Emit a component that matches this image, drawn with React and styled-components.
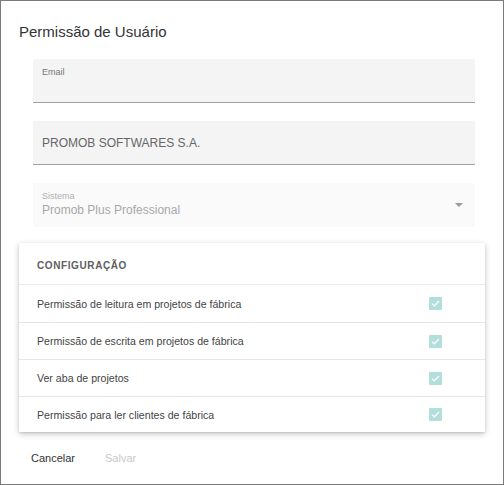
import React from "react";
import styled, { createGlobalStyle } from "styled-components";

const Global = createGlobalStyle`
  html, body { margin: 0; padding: 0; background: #fff; }
  body { font-family: "Liberation Sans", Arial, sans-serif; }
  * { box-sizing: border-box; }
`;

const Dialog = styled.div`
  width: 504px;
  height: 485px;
  border: 1px solid #7a7a7a;
  background: #fff;
  display: flex;
  flex-direction: column;
`;

const Title = styled.h2`
  margin: 0;
  padding: 22px 0 0 18px;
  font-size: 15px;
  font-weight: 400;
  color: #333;
  line-height: 18px;
`;

const Fields = styled.div`
  display: flex;
  flex-direction: column;
  gap: 18px;
  padding: 18px 28px 0 32px;
`;

const Field = styled.div`
  height: 44px;
  background: ${(p) => (p.$disabled ? "#fafafa" : "#f4f4f4")};
  border-bottom: ${(p) => (p.$underline ? "1px solid #a0a0a0" : "none")};
  border-radius: 2px 2px 0 0;
  padding: 0 9px;
  display: flex;
  flex-direction: column;
  justify-content: ${(p) => (p.$center ? "center" : "flex-start")};
  position: relative;
`;

const Label = styled.span`
  font-size: 9px;
  color: ${(p) => (p.$disabled ? "#b0b0b0" : "#777")};
  margin-top: 8px;
  line-height: 11px;
`;

const Value = styled.span`
  font-size: 12px;
  color: ${(p) => (p.$disabled ? "#a8a8a8" : "#666")};
  line-height: 16px;
`;

const Arrow = styled.span`
  position: absolute;
  right: 12px;
  top: 20px;
  width: 0;
  height: 0;
  border-left: 4px solid transparent;
  border-right: 4px solid transparent;
  border-top: 4px solid #9a9a9a;
`;

const Card = styled.div`
  margin: 16px 18px 0 18px;
  background: #fff;
  box-shadow: 0 2px 6px rgba(0, 0, 0, 0.22), 0 1px 2px rgba(0, 0, 0, 0.1);
`;

const CardHeader = styled.div`
  height: 42px;
  display: flex;
  align-items: center;
  padding: 3px 0 0 18px;
  font-size: 10px;
  font-weight: 700;
  letter-spacing: 0.6px;
  color: #5e5e5e;
  border-bottom: 1px solid #ececec;
`;

const Row = styled.div`
  height: ${(p) => (p.$last ? 36 : 37)}px;
  display: flex;
  align-items: center;
  justify-content: space-between;
  padding: 0 43px 0 18px;
  font-size: 10.6px;
  color: #444;
  border-top: ${(p) => (p.$first ? "none" : "1px solid #e6e6e6")};
`;

const Check = styled.span`
  width: 13px;
  height: 13px;
  background: #b2dfdb;
  border-radius: 1px;
  display: flex;
  align-items: center;
  justify-content: center;
`;

const Actions = styled.div`
  display: flex;
  gap: 30px;
  padding: 20px 0 0 30px;
`;

const Btn = styled.button`
  background: none;
  border: none;
  padding: 0;
  font-family: inherit;
  font-size: 11px;
  color: ${(p) => (p.disabled ? "#c8c8c8" : "#333")};
`;

const rows = [
  "Permissão de leitura em projetos de fábrica",
  "Permissão de escrita em projetos de fábrica",
  "Ver aba de projetos",
  "Permissão para ler clientes de fábrica",
];

export default function App() {
  return (
    <>
      <Global />
      <Dialog>
        <Title>Permissão de Usuário</Title>
        <Fields>
          <Field $underline>
            <Label>Email</Label>
          </Field>
          <Field $underline $center>
            <Value>PROMOB SOFTWARES S.A.</Value>
          </Field>
          <Field $disabled>
            <Label $disabled>Sistema</Label>
            <Value $disabled>Promob Plus Professional</Value>
            <Arrow />
          </Field>
        </Fields>
        <Card>
          <CardHeader>CONFIGURAÇÃO</CardHeader>
          {rows.map((r, i) => (
            <Row key={r} $first={i === 0} $last={i === rows.length - 1}>
              <span>{r}</span>
              <Check>
                <svg width="9" height="7" viewBox="0 0 9 7">
                  <path d="M1 3.6 L3.3 5.8 L8 1" fill="none" stroke="#fff" strokeWidth="1.2" />
                </svg>
              </Check>
            </Row>
          ))}
        </Card>
        <Actions>
          <Btn>Cancelar</Btn>
          <Btn disabled>Salvar</Btn>
        </Actions>
      </Dialog>
    </>
  );
}
